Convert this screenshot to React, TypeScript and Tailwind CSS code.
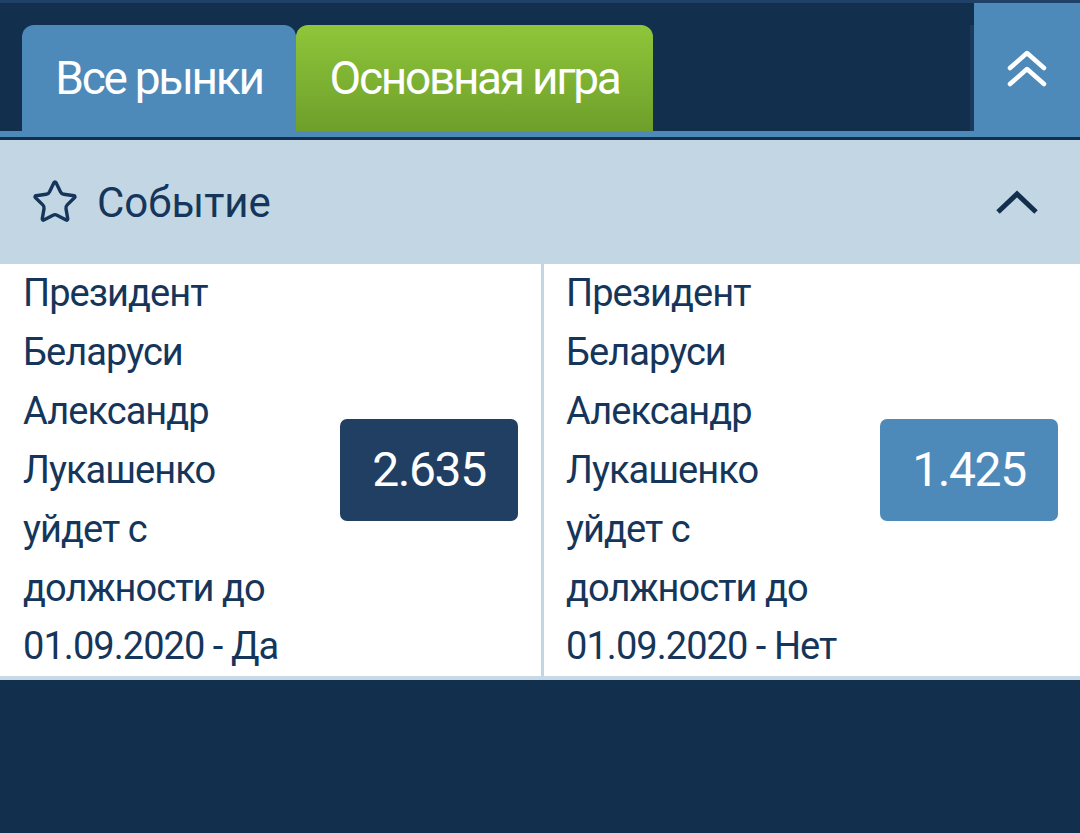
import { Star } from "lucide-react";

const left = [
  "Президент",
  "Беларуси",
  "Александр",
  "Лукашенко",
  "уйдет с",
  "должности до",
  "01.09.2020 - Да",
];
const right = [
  "Президент",
  "Беларуси",
  "Александр",
  "Лукашенко",
  "уйдет с",
  "должности до",
  "01.09.2020 - Нет",
];

function Outcome({
  lines,
  odds,
  dark,
  className,
}: {
  lines: string[];
  odds: string;
  dark: boolean;
  className: string;
}) {
  return (
    <div className={`${className} flex items-center justify-between`}>
      <div className="flex flex-col text-[38px] leading-[58.9px] text-[#15365a] tracking-[-0.025em]">
        {lines.map((l) => (
          <span key={l}>{l}</span>
        ))}
      </div>
      <button
        className={`${
          dark ? "bg-[#213f63]" : "bg-[#4d8aba]"
        } w-[178px] h-[102px] rounded-[7px] text-white text-[48px] tracking-[-0.03em] flex items-center justify-center`}
      >
        {odds}
      </button>
    </div>
  );
}

export default function App() {
  return (
    <main
      className="w-[1080px] h-[833px] bg-[#12304d] flex flex-col overflow-hidden"
      style={{ fontFamily: "Roboto, 'Noto Sans', sans-serif" }}
    >
      <div className="h-[3px] bg-[#1f4167]" />
      <div className="flex h-[134px]">
        <div className="flex-1 flex flex-col">
          <div className="flex flex-1 items-end pl-[22px] pr-[4px]">
            <div className="flex flex-1 h-[106px] border-r-[4px] border-[#1c3b5c] -mr-[4px]">
              <div className="w-[274px] h-full bg-[#4d8aba] rounded-t-[12px] flex items-center justify-center text-white text-[46px] tracking-[-0.05em]">
                Все рынки
              </div>
              <div className="w-[357px] h-full bg-gradient-to-b from-[#8fc63a] to-[#6e9f2b] rounded-t-[12px] flex items-center justify-center text-white text-[46px] tracking-[-0.05em]">
                Основная игра
              </div>
            </div>
          </div>
          <div className="h-[6px] bg-[#4d8aba]" />
        </div>
        <div className="w-[106px] bg-[#4d8aba] flex items-center justify-center">
          <svg width="40" height="40" viewBox="0 0 40 40" fill="none" stroke="white" strokeWidth="4.5" strokeLinecap="round" strokeLinejoin="round">
            <path d="M3 18 L20 3 L37 18" />
            <path d="M3 34 L20 19 L37 34" />
          </svg>
        </div>
      </div>
      <div className="h-[3px] bg-[#12304d]" />
      <div className="h-[124px] bg-[#c3d6e4] flex items-center justify-between pl-[31px] pr-[42px]">
        <div className="flex items-center gap-[18px]">
          <Star size={48} strokeWidth={1.7} className="text-[#15365a]" />
          <span className="text-[42px] text-[#15365a]">Событие</span>
        </div>
        <svg width="42" height="24" viewBox="0 0 42 24" fill="none" stroke="#12304d" strokeWidth="5">
          <path d="M2 22 L21 4 L40 22" />
        </svg>
      </div>
      <div className="flex bg-white border-b-[4px] border-[#c8d9e6]">
        <Outcome className="w-[541px] pl-[23px] pr-[23px]" lines={left} odds="2.635" dark />
        <div className="w-[3px] bg-[#c3d6e4]" />
        <Outcome className="flex-1 pl-[22px] pr-[22px]" lines={right} odds="1.425" dark={false} />
      </div>
    </main>
  );
}
